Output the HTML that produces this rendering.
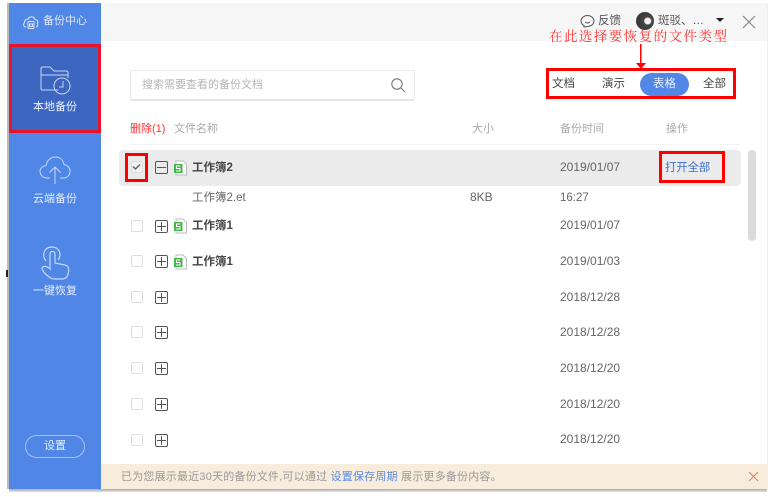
<!DOCTYPE html>
<html><head><meta charset="utf-8">
<style>
html,body{margin:0;padding:0;background:#fff}
body{position:relative;width:780px;height:497px;overflow:hidden;font-family:"Liberation Sans","Noto Sans CJK SC",sans-serif;font-size:12px;color:#555}
#w{position:absolute;left:0;top:0;width:780px;height:497px;filter:blur(.35px)}
.a{position:absolute;white-space:nowrap;line-height:16px}
.r{position:absolute;border:3px solid #f00;box-sizing:border-box}
.cb{position:absolute;left:131px;width:10px;height:10px;border:1px solid #ddd;border-radius:2px;background:#fff}
.pm{position:absolute;left:155px;width:11px;height:11px;border:1px solid #555;border-radius:2px}
.pm:before{content:"";position:absolute;left:1px;right:1px;top:5px;height:1px;background:#555}
.pm.p:after{content:"";position:absolute;top:1px;bottom:1px;left:5px;width:1px;background:#555}
.d{left:560px;color:#666}
.n{left:192px;font-weight:bold;color:#444;font-size:11.5px}
.s{position:absolute;left:173px}
.w{color:#e6eefc;font-size:11px;text-align:center;left:9px;width:92px}
</style></head><body>
<div id="w">
<div style="position:absolute;left:7px;top:3px;width:2px;height:486px;background:#bbb"></div>
<div style="position:absolute;left:6px;top:270px;width:2px;height:7px;background:#222"></div>
<div style="position:absolute;left:9px;top:3px;width:92px;height:486px;background:#5086e6"></div>
<div style="position:absolute;left:101px;top:3px;width:666px;height:38px;background:#f6f6f6"></div>
<div style="position:absolute;left:9px;top:489px;width:758px;height:3px;background:linear-gradient(#aaa,#e4e4e4)"></div>
<div style="position:absolute;left:767px;top:3px;width:1px;height:486px;background:#eee"></div>
<div style="position:absolute;left:10px;top:45px;width:90px;height:87px;background:#3c66bf"></div>
<div class="r" style="left:9px;top:44px;width:92px;height:89px;border-color:#e8152a"></div>

<svg style="position:absolute;left:22px;top:13px" width="18" height="18" viewBox="0 0 18 18" fill="none" stroke="#dbe6fb" stroke-width="1"><path d="M4 14H3.500C1.500 14 1 11 2.500 9.500 2.500 6.500 5 6 6 6.500 7 3 12 3 13 6.500 15 6.500 16.500 8.500 15.500 10.500 16.500 12 15.500 14 14 14"/><rect x="6" y="8.500" width="6" height="7" rx="1"/><rect x="7.500" y="11" width="3" height="2.500"/></svg>
<div class="a" style="left:43px;top:13px;font-size:11px;color:#dfe9fb">备份中心</div>

<svg style="position:absolute;left:39px;top:65px" width="34" height="32" viewBox="0 0 34 32" fill="none" stroke="#c9d6f2" stroke-width="1"><path d="M19 25H3.500Q2 25 2 23.500V3.500Q2 2 3.500 2H11L15 6H27Q29 6 29 8V13"/><path d="M2 10H29"/><circle cx="23" cy="21" r="8"/><path d="M24 16V22H20"/></svg>
<div class="a w" style="top:99px;color:#eef3fd">本地备份</div>

<svg style="position:absolute;left:38px;top:155px" width="34" height="30" viewBox="0 0 34 30" fill="none" stroke="#c6d8f8" stroke-width="1"><path d="M12 23H9C4 23 2 19 2 16.500 2 13 5 11 8 10.500 9 5 13 2 17.500 2 22 2 25 5 26 9.500 30 10.500 32 13 32 16.500 32 20 29 23 26 23H22"/><path d="M17 29V12M11.500 17.500L17 12 22.500 17.500"/></svg>
<div class="a w" style="top:191px">云端备份</div>

<svg style="position:absolute;left:40px;top:245px" width="32" height="36" viewBox="0 0 32 36" fill="none" stroke="#c6d8f8" stroke-width="1.200"><path d="M6 16C2 12 3 2 12 2 20 2 22 11 18 15"/><path d="M10 24V9C10 5.500 15 5.500 15 9V18L25 20C29 21 29 24 28.500 27 28 31 26 34 22 34H14C10 34 3 27 2 24 2 21 6 20 10 24Z"/></svg>
<div class="a w" style="top:283px">一键恢复</div>

<div style="position:absolute;left:25px;top:435px;width:58px;height:21px;border:1px solid #a5c2f3;border-radius:12px"></div>
<div class="a w" style="left:25px;width:60px;top:438px">设置</div>

<svg style="position:absolute;left:580px;top:14px" width="15" height="14" viewBox="0 0 15 14" fill="none" stroke="#555"><path d="M4 11.500C2 10.500 1 9 1 7 1 4 4 1.500 7.500 1.500S14 4 14 7 11 12.500 7.500 12.500L4 13Z"/><path d="M5 8Q7.500 10 10 8"/></svg>
<div class="a" style="left:598px;top:13px;font-size:11.500px;color:#555">反馈</div>
<div style="position:absolute;left:636px;top:12px;width:18px;height:18px;border-radius:50%;background:radial-gradient(circle at 65% 50%,#eee 0 3px,#444 4px,#333 100%)"></div>
<div class="a" style="left:658px;top:13px;font-size:11.500px;color:#555">斑驳、…</div>
<div style="position:absolute;left:716px;top:18px;border:4px solid transparent;border-top:4px solid #222"></div>
<svg style="position:absolute;left:742px;top:15px" width="14" height="14" stroke="#888" stroke-width="1.200"><path d="M1 1L13 13M13 1L1 13"/></svg>

<div class="a" style="left:549px;top:29px;font-size:13.500px;letter-spacing:1.450px;color:#f33;font-family:'Liberation Serif','Noto Serif CJK SC',serif">在此选择要恢复的文件类型</div>
<svg style="position:absolute;left:634px;top:43px" width="14" height="28" fill="#f00"><rect x="6" y="1" width="1.500" height="20"/><path d="M2 20H12L7 26Z"/></svg>

<div class="r" style="left:546px;top:68px;width:190px;height:31px"></div>
<div class="a" style="left:552px;top:76px;font-size:11.500px;color:#444">文档</div>
<div class="a" style="left:602px;top:76px;font-size:11.500px;color:#444">演示</div>
<div style="position:absolute;left:640px;top:73px;width:49px;height:23px;border-radius:12px;background:#5287e6"></div>
<div class="a" style="left:653px;top:76px;font-size:11.500px;color:#e8effc">表格</div>
<div class="a" style="left:703px;top:76px;font-size:11.500px;color:#444">全部</div>

<div style="position:absolute;left:130px;top:70px;width:283px;height:28px;border:1px solid #eaeaea;border-bottom:2px solid #e6e6e6;border-radius:2px"></div>
<div class="a" style="left:142px;top:77px;font-size:11px;color:#b5b5b5">搜索需要查看的备份文档</div>
<svg style="position:absolute;left:390px;top:77px" width="16" height="16" fill="none" stroke="#777" stroke-width="1.100"><circle cx="7" cy="7" r="5.200"/><path d="M11 11L15 15"/></svg>

<div class="a" style="left:130px;top:121px;font-size:11px;color:#f33">删除(1)</div>
<div class="a" style="left:174px;top:121px;font-size:11px;color:#aaa">文件名称</div>
<div class="a" style="left:472px;top:121px;font-size:11px;color:#aaa">大小</div>
<div class="a" style="left:560px;top:121px;font-size:11px;color:#aaa">备份时间</div>
<div class="a" style="left:666px;top:121px;font-size:11px;color:#aaa">操作</div>
<div style="position:absolute;left:130px;top:144px;width:610px;height:1px;background:#f3f3f3"></div>

<div style="position:absolute;left:119px;top:150px;width:622px;height:36px;background:#ebebeb;border-radius:4px"></div>
<div class="cb" style="top:161px;background:#f2f2f2"></div>
<svg style="position:absolute;left:130px;top:160px" width="13" height="13" fill="none" stroke="#666" stroke-width="1.500"><path d="M3 6.500L5.500 9 10 4.500"/></svg>
<div class="r" style="left:125px;top:153px;width:23px;height:29px"></div>
<div class="pm" style="top:161px"></div>
<svg class="s" style="top:160px" width="15" height="16" viewBox="0 0 15 16"><path d="M3 1H10L13.500 4.500V15H3Z" fill="#fff" stroke="#bbb"/><rect x="1" y="4" width="8.500" height="9" fill="#43b649"/><path d="M7.500 6H3.500V8.500H7V11H3" fill="none" stroke="#fff"/></svg>
<div class="a n" style="top:160px">工作簿2</div>
<div class="a d" style="top:159px">2019/01/07</div>
<div class="a" style="left:665px;top:160px;color:#3c6fc9;font-size:11.300px">打开全部</div>
<div class="r" style="left:659px;top:151px;width:66px;height:32px"></div>

<div class="a" style="left:192px;top:190px;color:#666;font-size:11.500px">工作簿2.et</div>
<div class="a" style="left:470px;top:189px;color:#666">8KB</div>
<div class="a" style="left:560px;top:190px;color:#666;font-size:11.500px">16:27</div>

<div class="cb" style="top:220px"></div><div class="pm p" style="top:220px"></div>
<svg class="s" style="top:218px" width="15" height="16" viewBox="0 0 15 16"><path d="M3 1H10L13.500 4.500V15H3Z" fill="#fff" stroke="#bbb"/><rect x="1" y="4" width="8.500" height="9" fill="#43b649"/><path d="M7.500 6H3.500V8.500H7V11H3" fill="none" stroke="#fff"/></svg>
<div class="a n" style="top:218px">工作簿1</div><div class="a d" style="top:217px">2019/01/07</div>

<div class="cb" style="top:255px"></div><div class="pm p" style="top:255px"></div>
<svg class="s" style="top:254px" width="15" height="16" viewBox="0 0 15 16"><path d="M3 1H10L13.500 4.500V15H3Z" fill="#fff" stroke="#bbb"/><rect x="1" y="4" width="8.500" height="9" fill="#43b649"/><path d="M7.500 6H3.500V8.500H7V11H3" fill="none" stroke="#fff"/></svg>
<div class="a n" style="top:254px">工作簿1</div><div class="a d" style="top:253px">2019/01/03</div>

<div class="cb" style="top:291px"></div><div class="pm p" style="top:291px"></div><div class="a d" style="top:289px">2018/12/28</div>
<div class="cb" style="top:326px"></div><div class="pm p" style="top:326px"></div><div class="a d" style="top:324px">2018/12/28</div>
<div class="cb" style="top:362px"></div><div class="pm p" style="top:362px"></div><div class="a d" style="top:360px">2018/12/20</div>
<div class="cb" style="top:398px"></div><div class="pm p" style="top:398px"></div><div class="a d" style="top:396px">2018/12/20</div>
<div class="cb" style="top:434px"></div><div class="pm p" style="top:434px"></div><div class="a d" style="top:431px">2018/12/20</div>

<div style="position:absolute;left:748px;top:150px;width:8px;height:91px;background:#dcdcdc;border-radius:4px"></div>

<div style="position:absolute;left:101px;top:464px;width:666px;height:25px;background:#f8ecdc"></div>
<div class="a" style="left:121px;top:469px;font-size:11px;letter-spacing:.2px;color:#999">已为您展示最近30天的备份文件,可以通过 <span style="color:#5b8be0">设置保存周期</span> 展示更多备份内容。</div>
<svg style="position:absolute;left:748px;top:471px" width="11" height="11" stroke="#e08050"><path d="M1 1L10 10M10 1L1 10"/></svg>
</div>
</body></html>
